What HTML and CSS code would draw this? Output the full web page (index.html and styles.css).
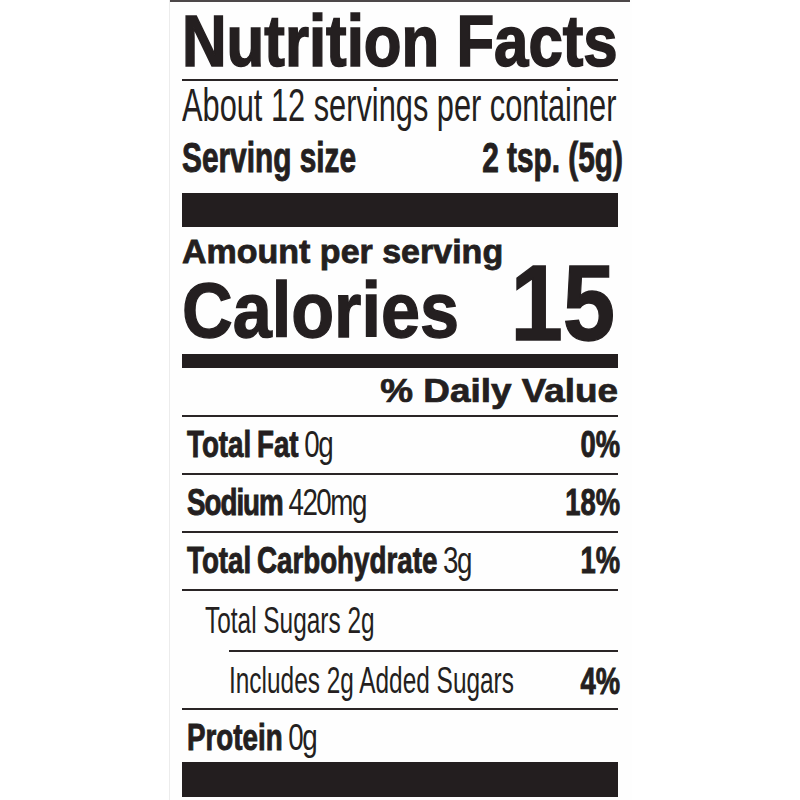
FILE: index.html
```html
<!DOCTYPE html>
<html lang="en">
<head>
<meta charset="utf-8">
<title>Nutrition Facts</title>
<link rel="stylesheet" href="styles.css">
</head>
<body>
<div class="paper">
  <div class="edge"></div>
  <section class="label">
    <h1 class="title"><span class="sx">Nutrition Facts</span></h1>
    <div class="rule"></div>
    <p class="servings"><span class="sx">About 12 servings per container</span></p>
    <div class="size-row">
      <span class="sx">Serving size</span>
      <span class="sx">2 tsp. (5g)</span>
    </div>
    <div class="bar bar-lg"></div>
    <div class="cal-block">
      <div class="cal-left">
        <div class="amount"><span class="sx">Amount per serving</span></div>
        <div class="calories"><span class="sx">Calories</span></div>
      </div>
      <div class="cal-num"><span class="sx">15</span></div>
    </div>
    <div class="bar bar-md"></div>
    <div class="dv"><span class="sx">% Daily Value</span></div>

    <div class="row">
      <span class="sx name"><b>Total Fat</b> <span class="reg">0g</span></span>
      <span class="sx pct">0%</span>
    </div>
    <div class="row">
      <span class="sx name"><b class="tight">Sodium</b> <span class="reg">420mg</span></span>
      <span class="sx pct">18%</span>
    </div>
    <div class="row">
      <span class="sx name"><b>Total Carbohydrate</b> <span class="reg">3g</span></span>
      <span class="sx pct">1%</span>
    </div>
    <div class="row row-sugars">
      <span class="sx name">Total Sugars 2g</span>
    </div>
    <div class="row row-added">
      <span class="sx name">Includes 2g Added Sugars</span>
      <span class="sx pct">4%</span>
    </div>
    <div class="row row-protein">
      <span class="sx name"><b>Protein</b> <span class="reg">0g</span></span>
    </div>
    <div class="bar bar-bottom"></div>
  </section>
</div>
</body>
</html>
```

FILE: styles.css
```css
html, body {
  margin: 0;
  padding: 0;
  background: #ffffff;
}

body {
  font-family: "Liberation Sans", Arial, sans-serif;
  color: #241f20;
  height: 800px;
  overflow: hidden;
}

.paper {
  margin-left: 170px;
  width: 462px;
  height: 800px;
  background: #fefefe;
  box-shadow: -1px 0 0 #ececec;
}

.edge {
  height: 2px;
  background: #4d4849;
  margin-right: 2px;
}

.label {
  padding: 0 14px 0 12px;
}

/* Text blocks: --f is the visual cap font size, --sx the horizontal
   compression; glyphs are drawn at f*sx and stretched back vertically
   about their baseline. */
.title, .servings, .size-row, .amount, .calories, .cal-num, .dv, .row {
  font-size: calc(var(--f) * var(--sx));
  line-height: var(--lh);
}

.sx {
  display: inline-block;
  white-space: nowrap;
  font-size: calc(var(--f) * var(--sx));
  line-height: var(--lh);
  transform: scaleY(calc(1 / var(--sx)));
  transform-origin: 0 calc(var(--lh) / 2 + 0.3465em);
}

/* Title */
.title {
  margin: 0 -8px 0 0;
  font-weight: 700;
  --f: 73px;
  --sx: 0.846;
  --lh: 50px;
  padding-top: 17.8px;
  padding-bottom: 9.2px;
  -webkit-text-stroke: 1.4px #241f20;
}

.rule {
  height: 2px;
  background: #2a2526;
}

.servings {
  margin: 0;
  font-weight: 400;
  --f: 47px;
  --sx: 0.655;
  --lh: 37.8px;
  padding-top: 11.2px;
}

.size-row {
  display: flex;
  justify-content: space-between;
  font-weight: 700;
  --f: 42px;
  --sx: 0.71;
  --lh: 48.6px;
  padding-top: 8.4px;
  margin-bottom: 6px;
  margin-right: -5px;
  -webkit-text-stroke: 0.7px #241f20;
}

.bar {
  background: #231e1f;
}

.bar-lg {
  height: 34px;
}

.bar-md {
  height: 14px;
}

.bar-bottom {
  height: 35px;
}

/* Calories */
.cal-block {
  display: flex;
  justify-content: space-between;
  align-items: flex-end;
  padding-bottom: 8px;
  font-weight: 700;
}

.amount {
  --f: 34px;
  --sx: 1;
  --lh: 49px;
  -webkit-text-stroke: 0.8px #241f20;
}

.calories {
  --f: 78px;
  --sx: 0.9;
  --lh: 64.6px;
  padding-top: 5.4px;
  -webkit-text-stroke: 1.2px #241f20;
}

.cal-num {
  --f: 107.5px;
  --sx: 0.875;
  --lh: 77.2px;
  margin-right: 3px;
  -webkit-text-stroke: 1.2px #241f20;
}

.dv {
  text-align: right;
  font-weight: 700;
  --f: 34px;
  --sx: 1.085;
  --lh: 44.4px;
  padding-bottom: 2.6px;
  -webkit-text-stroke: 0.8px #241f20;
}

/* Nutrient rows */
.row {
  display: flex;
  justify-content: space-between;
  border-top: 2px solid #2a2526;
  --f: 37px;
  --sx: 0.75;
  --lh: 49.6px;
  padding-top: 6.4px;
  padding-left: 5px;
}

.row .name {
  min-width: 0;
  word-spacing: -2px;
}

.row b {
  font-weight: 700;
  -webkit-text-stroke: 0.7px #241f20;
}

.row b.tight {
  letter-spacing: -1px;
}

.row .reg {
  font-weight: 400;
  letter-spacing: -1.5px;
}

.row .pct {
  font-weight: 700;
  margin-right: -2px;
  --sx: 0.74;
  -webkit-text-stroke: 0.7px #241f20;
}

.row-sugars {
  --sx: 0.66;
  --lh: 50.3px;
  padding-top: 8.7px;
  padding-left: 23px;
}

.row-sugars .name,
.row-added .name {
  word-spacing: 0;
}

.row-added {
  --sx: 0.66;
  --lh: 47.3px;
  padding-top: 8.7px;
  margin-left: 47px;
  padding-left: 0;
}

.row-protein {
  --lh: 41.6px;
  padding-top: 10.4px;
}
```
